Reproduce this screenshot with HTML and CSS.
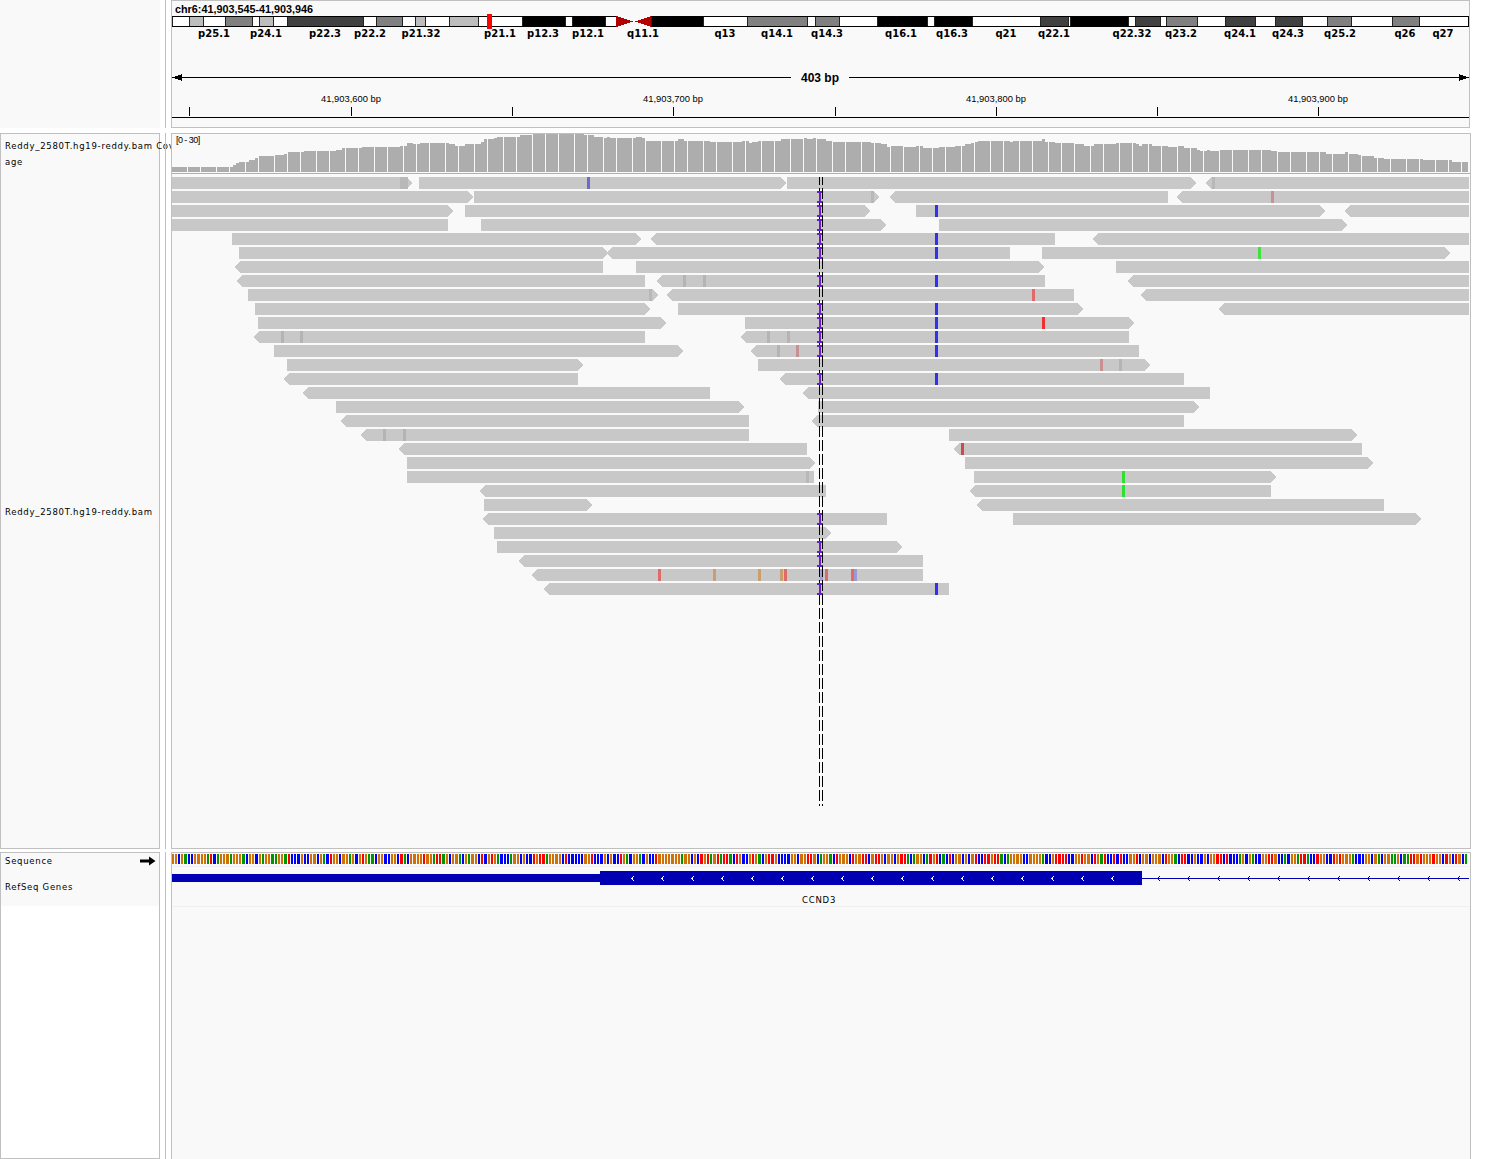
FILE: index.html
```html
<!DOCTYPE html>
<html lang="en">
<head>
    <meta charset="UTF-8">
    <title>IGV - chr6:41,903,545-41,903,946</title>
    <link rel="stylesheet" href="styles.css">
</head>
<body>
    <div class="view">
        <section class="row row-header">
            <div class="names names-plain"></div>
            <div class="gutter"></div>
            <div class="panel panel-header">
                <div class="locus">chr6:41,903,545-41,903,946</div>
                <svg id="ruler" viewBox="172 1 1297 126">
                    <g id="bands"></g>
                    <g class="band-labels">
                        <text x="214" y="37">p25.1</text>
                        <text x="266" y="37">p24.1</text>
                        <text x="325" y="37">p22.3</text>
                        <text x="370" y="37">p22.2</text>
                        <text x="421" y="37">p21.32</text>
                        <text x="500" y="37">p21.1</text>
                        <text x="543" y="37">p12.3</text>
                        <text x="588" y="37">p12.1</text>
                        <text x="643" y="37">q11.1</text>
                        <text x="725" y="37">q13</text>
                        <text x="777" y="37">q14.1</text>
                        <text x="827" y="37">q14.3</text>
                        <text x="901" y="37">q16.1</text>
                        <text x="952" y="37">q16.3</text>
                        <text x="1006" y="37">q21</text>
                        <text x="1054" y="37">q22.1</text>
                        <text x="1132" y="37">q22.32</text>
                        <text x="1181" y="37">q23.2</text>
                        <text x="1240" y="37">q24.1</text>
                        <text x="1288" y="37">q24.3</text>
                        <text x="1340" y="37">q25.2</text>
                        <text x="1405" y="37">q26</text>
                        <text x="1443" y="37">q27</text>
                    </g>
                    <text class="span-label" x="820" y="82">403 bp</text>
                    <g class="tick-labels">
                        <text x="351" y="102">41,903,600 bp</text>
                        <text x="673" y="102">41,903,700 bp</text>
                        <text x="996" y="102">41,903,800 bp</text>
                        <text x="1318" y="102">41,903,900 bp</text>
                    </g>
                </svg>
            </div>
        </section>

        <section class="row row-main">
            <div class="names">
                <div class="name-line name-cov">Reddy_2580T.hg19-reddy.bam Cov</div>
                <div class="name-line name-wrap">age</div>
                <div class="name-line name-bam">Reddy_2580T.hg19-reddy.bam</div>
            </div>
            <div class="gutter"></div>
            <div class="panel panel-main">
                <div class="range">[0 - 30]</div>
                <svg id="tracks" viewBox="172 134 1298 714"></svg>
            </div>
        </section>

        <section class="row row-bottom">
            <div class="names names-bottom">
                <div class="names-fill">
                    <div class="seq-head">
                        <span class="name-line">Sequence</span>
                        <svg class="strand" width="16" height="10" viewBox="0 0 16 10"><path d="M0 3.5H9V0.5L15.5 5L9 9.5V6.5H0Z"/></svg>
                    </div>
                    <div class="name-line name-genes">RefSeq Genes</div>
                </div>
            </div>
            <div class="gutter"></div>
            <div class="panel panel-bottom">
                <svg id="features" viewBox="172 853 1298 306">
                    <text class="gene-name" x="819" y="903">CCND3</text>
                </svg>
            </div>
        </section>
    </div>
    <script src="app.js"></script>
</body>
</html>
```

FILE: styles.css
```css
html, body {
    margin: 0;
    padding: 0;
    background: #fff;
}

.view {
    display: flex;
    flex-direction: column;
    width: 1489px;
    height: 1159px;
    overflow: hidden;
}

.row {
    display: flex;
    flex: none;
}

.row-header {
    height: 128px;
    margin-bottom: 5px;
    padding-right: 19px;
}

.row-main {
    height: 716px;
    margin-bottom: 3px;
    padding-right: 18px;
}

.row-bottom {
    height: 307px;
    padding-right: 18px;
}

.names {
    flex: none;
    box-sizing: border-box;
    width: 160px;
    background: #f9f9f9;
    border: 1px solid #c0c0c0;
    font-family: "DejaVu Sans", sans-serif;
    font-size: 8.5px;
    letter-spacing: 0.73px;
    color: #000;
}

.names-plain {
    border: none;
}

.names-bottom {
    background: #fff;
}

.names-fill {
    height: 53px;
    background: #f9f9f9;
}

.name-line {
    white-space: nowrap;
    line-height: 12px;
}

.name-cov {
    width: 170px;
    overflow: hidden;
    padding: 6px 0 0 4px;
    box-sizing: border-box;
}

.name-wrap {
    padding: 4px 0 0 4px;
}

.name-bam {
    padding: 338px 0 0 4px;
}

.seq-head {
    display: flex;
    align-items: center;
    justify-content: space-between;
    padding: 2px 3px 0 4px;
}

.name-genes {
    padding: 14px 0 0 4px;
}

.gutter {
    flex: none;
    box-sizing: border-box;
    width: 11px;
    background: linear-gradient(#c0c0c0, #c0c0c0) 5px 0 / 1px 100% no-repeat;
}

.panel {
    position: relative;
    flex: 1;
    box-sizing: border-box;
    background: #f9f9f9;
    border: 1px solid #c0c0c0;
}

.panel-bottom {
    border-bottom: none;
}

.panel svg {
    display: block;
    width: 100%;
    height: 100%;
    shape-rendering: crispEdges;
}

.locus {
    position: absolute;
    left: 3px;
    top: 1px;
    font: bold 10.8px/14px "Liberation Sans", Arial, sans-serif;
    color: #000;
}

.range {
    position: absolute;
    left: 4px;
    top: 0;
    font: 9px/12px "Liberation Sans", Arial, sans-serif;
    letter-spacing: -0.55px;
    color: #000;
    z-index: 1;
}

.band-labels text {
    font: bold 10px "DejaVu Sans", sans-serif;
    text-anchor: middle;
    fill: #000;
}

.span-label {
    font: bold 12px "Liberation Sans", Arial, sans-serif;
    text-anchor: middle;
    fill: #000;
}

.tick-labels text {
    font: 9.4px "Liberation Sans", Arial, sans-serif;
    text-anchor: middle;
    fill: #000;
}

.gene-name {
    font: 8.5px "DejaVu Sans", sans-serif;
    letter-spacing: 0.8px;
    text-anchor: middle;
    fill: #000;
}
```

FILE: app.js
```js
const NS = 'http://www.w3.org/2000/svg';

function add(parent, tag, attrs) {
    const el = document.createElementNS(NS, tag);
    for (const k in attrs) el.setAttribute(k, attrs[k]);
    parent.appendChild(el);
    return el;
}

function rect(parent, x, y, w, h, fill) {
    return add(parent, 'rect', {x: x, y: y, width: w, height: h, fill: fill});
}

/* ---- cytoband ---- */
const WHITE = '#fff', G25 = '#bdbdbd', G50 = '#808080', G75 = '#404040', BLK = '#000';
const BANDS = [
    [172, 189, WHITE], [189, 203, G25], [203, 225, WHITE], [225, 252, G50], [252, 259, WHITE],
    [259, 273, G25], [273, 287, WHITE], [287, 363, G75], [363, 376, WHITE], [376, 402, G50],
    [402, 415, WHITE], [415, 425, G25], [425, 449, WHITE], [449, 478, G25], [478, 522, WHITE],
    [522, 565, BLK], [565, 572, WHITE], [572, 605, BLK], [605, 616, WHITE],
    [651, 703, BLK], [703, 747, WHITE], [747, 807, G50], [807, 815, WHITE], [815, 839, G50],
    [839, 877, WHITE], [877, 927, BLK], [927, 934, WHITE], [934, 972, BLK], [972, 1040, WHITE],
    [1040, 1068, G75], [1068, 1070, WHITE], [1070, 1128, BLK], [1128, 1135, WHITE], [1135, 1160, G75],
    [1160, 1166, WHITE], [1166, 1197, G50], [1197, 1225, WHITE], [1225, 1255, G75], [1255, 1275, WHITE],
    [1275, 1302, G75], [1302, 1327, WHITE], [1327, 1351, G50], [1351, 1392, WHITE], [1392, 1419, G50],
    [1419, 1469, WHITE]
];

function drawHeader() {
    const g = document.getElementById('bands');
    const svg = document.getElementById('ruler');
    for (const [a, b, c] of BANDS) {
        rect(g, a, 16, b - a, 11, c);
        rect(g, a, 16, 1, 11, '#222');
    }
    // outline stops at the centromere
    rect(g, 172, 16, 444, 1, BLK);
    rect(g, 172, 26, 444, 1, BLK);
    rect(g, 651, 16, 818, 1, BLK);
    rect(g, 651, 26, 818, 1, BLK);
    rect(g, 1468, 16, 1, 11, BLK);
    add(g, 'polygon', {points: '616,16 616,27 633,21.5', fill: '#b00000'});
    add(g, 'polygon', {points: '651,16 651,27 635,21.5', fill: '#b00000'});
    rect(g, 487, 14, 5, 15, '#ff0000');

    // span line with the gap for the label
    rect(svg, 172, 77, 619, 1, BLK);
    rect(svg, 849, 77, 620, 1, BLK);
    add(svg, 'polygon', {points: '172,77.5 182,74 182,81', fill: BLK});
    add(svg, 'polygon', {points: '1469,77.5 1459,74 1459,81', fill: BLK});

    // ticks
    rect(svg, 172, 117, 1297, 1, BLK);
    for (const x of [189, 351, 512, 673, 835, 996, 1157, 1318]) rect(svg, x, 107, 1, 9, BLK);
}

/* ---- reads: one array per row, [from, to, strand, [[x, colour]...]] ---- */
const GREY = '#b4b4b4', PINK = '#c89090', RED = '#f03030', LRED = '#e06a6a', TAN = '#c8a070';
const READS = [
    [[172, 412, 'R', [[400, '#b8b8b8', 8]]], [419, 786, 'R', [[587, '#6a6ad0']]], [787, 1196, 'R'], [1206, 1469, 'L', [[1212, '#b8b8b8']]]],
    [[172, 473, 'R'], [474, 879, 'R', [[871, '#b8b8b8']]], [890, 1168, 'L'], [1177, 1469, 'L', [[1271, PINK]]]],
    [[172, 453, 'R'], [465, 870, 'R'], [916, 1325, 'R'], [1345, 1469, 'L']],
    [[172, 448], [481, 886, 'R'], [939, 1347, 'R']],
    [[232, 641, 'R'], [651, 1055, 'L'], [1093, 1469, 'L']],
    [[239, 608, 'R'], [607, 1010, 'L'], [1042, 1450, 'R', [[1258, '#40e040']]]],
    [[235, 603, 'L'], [636, 1044, 'R'], [1116, 1469]],
    [[237, 645, 'L'], [657, 1045, 'L', [[683, GREY], [703, GREY]]], [1128, 1469, 'L']],
    [[248, 658, 'R', [[649, '#b8b8b8']]], [667, 1074, 'L', [[1032, LRED]]], [1141, 1469, 'L']],
    [[255, 650, 'R'], [678, 1083, 'R'], [1219, 1469, 'L']],
    [[258, 666, 'R'], [745, 1134, 'R', [[1042, RED]]]],
    [[254, 645, 'L', [[281, GREY], [300, GREY]]], [741, 1129, 'L', [[767, GREY], [787, GREY]]]],
    [[274, 683, 'R'], [751, 1139, 'L', [[777, GREY], [796, PINK]]]],
    [[287, 583, 'R'], [758, 1150, 'R', [[1100, PINK], [1119, GREY]]]],
    [[284, 578, 'L'], [780, 1184, 'L']],
    [[303, 710, 'L'], [803, 1210, 'L']],
    [[336, 744, 'R'], [818, 1199, 'R']],
    [[341, 749, 'L'], [812, 1184, 'L']],
    [[361, 749, 'L', [[383, GREY], [403, GREY]]], [949, 1357, 'R']],
    [[399, 807, 'L'], [954, 1362, 'L', [[961, '#d04848']]]],
    [[407, 815, 'R'], [965, 1373, 'R']],
    [[407, 814, '', [[806, '#b8b8b8']]], [974, 1276, 'R', [[1122, '#30e030']]]],
    [[480, 826, 'L'], [970, 1271, 'L', [[1122, '#30e030']]]],
    [[484, 592, 'R'], [977, 1384, 'L']],
    [[483, 887, 'L'], [1013, 1421, 'R']],
    [[494, 831, 'R']],
    [[497, 902, 'R']],
    [[519, 923, 'L']],
    [[532, 923, 'L', [[658, LRED], [713, TAN], [758, TAN], [780, TAN], [784, LRED], [820, '#a0a0d0'], [825, LRED], [851, LRED], [854, '#9a9ad0']]]],
    [[544, 949, 'L']]
];
const INSERTION_ROWS = [1, 2, 3, 4, 5, 7, 9, 10, 11, 12, 14, 24, 26, 27, 29];
const BLUE_ROWS = [2, 4, 5, 7, 9, 10, 11, 12, 14, 29];

function readShape(x1, x2, dir, y) {
    const h = 12, a = 5;
    const r = dir === 'R' ? `${x2 - a},${y + h} ${x2},${y + h / 2} ${x2 - a},${y}` : `${x2},${y + h} ${x2},${y}`;
    return dir === 'L' ? `${x1 + a},${y} ${x1},${y + h / 2} ${x1 + a},${y + h} ${r}` : `${x1},${y} ${x1},${y + h} ${r}`;
}

function dashedLine(svg, x) {
    for (let y = 174; y < 806; y += 14) {
        const top = Math.max(y, 177), end = Math.min(y + 11, 806);
        rect(svg, x, top, 1, end - top, '#000');
    }
}

function drawTracks() {
    const svg = document.getElementById('tracks');
    const colW = 3.225;

    // coverage comes from the reads themselves, 30 reads fill the track
    for (let i = 0; i < 402; i++) {
        const x = Math.floor(172 + i * colW);
        const mid = x + 1;
        let n = 0;
        for (const row of READS) for (const r of row) if (r[0] <= mid && r[1] >= mid) n++;
        const h = Math.round(n * 1.31);
        if (x === 935) {
            rect(svg, 935, 172 - h, 3, 14, '#0000b0');
            rect(svg, 935, 172 - h + 14, 3, h - 14, '#008000');
        } else {
            rect(svg, x, 172 - h, 3, h, '#adadad');
        }
    }
    rect(svg, 172, 173, 1298, 1, '#b0b0b0');

    READS.forEach((row, i) => {
        const y = 177 + i * 14;
        for (const [x1, x2, dir, marks] of row) {
            add(svg, 'polygon', {points: readShape(x1, x2, dir, y), fill: '#c8c8c8'});
            for (const m of marks || []) rect(svg, m[0], y, m[2] || 3, 12, m[1]);
        }
    });

    for (const i of BLUE_ROWS) rect(svg, 935, 177 + i * 14, 3, 12, '#3030f0');

    // center line, the insertion marks sit over its left stroke
    dashedLine(svg, 819);
    for (const i of INSERTION_ROWS) {
        const y = 177 + i * 14;
        rect(svg, 817, y, 6, 2, '#6a1cd0');
        rect(svg, 819, y, 2, 12, '#6a1cd0');
        rect(svg, 817, y + 10, 6, 2, '#6a1cd0');
    }
    dashedLine(svg, 822);
}

/* ---- sequence and gene ---- */
const BASES = {A: '#009600', C: '#0000ff', G: '#d17105', T: '#ff0000'};

function drawFeatures() {
    const svg = document.getElementById('features');
    let seed = 2580;
    const colW = 3.225;
    for (let i = 0; i < 402; i++) {
        seed = (seed * 1103515245 + 12345) & 0x7fffffff;
        const v = (seed >> 8) % 100;
        const base = v < 40 ? 'G' : v < 68 ? 'C' : v < 85 ? 'T' : 'A';
        const x = Math.floor(172 + i * colW);
        const next = Math.floor(172 + (i + 1) * colW);
        rect(svg, x, 854, next - x - 1, 10, BASES[base]);
    }
    rect(svg, 172, 866, 1298, 1, '#efefef');
    rect(svg, 172, 906, 1298, 1, '#efefef');

    const BLUE = '#0000b2';
    rect(svg, 172, 874, 428, 8, BLUE);
    rect(svg, 600, 871, 542, 14, BLUE);
    rect(svg, 1142, 878, 327, 1, BLUE);
    for (let x = 632; x <= 1112; x += 30) {
        add(svg, 'polyline', {points: `${x + 2},876 ${x},878.5 ${x + 2},881`, fill: 'none', stroke: '#fff', 'stroke-width': 1});
    }
    for (let x = 1159; x <= 1459; x += 30) {
        add(svg, 'polyline', {points: `${x + 1},876 ${x - 1},878.5 ${x + 1},881`, fill: 'none', stroke: BLUE, 'stroke-width': 1});
    }
}

drawHeader();
drawTracks();
drawFeatures();
```
